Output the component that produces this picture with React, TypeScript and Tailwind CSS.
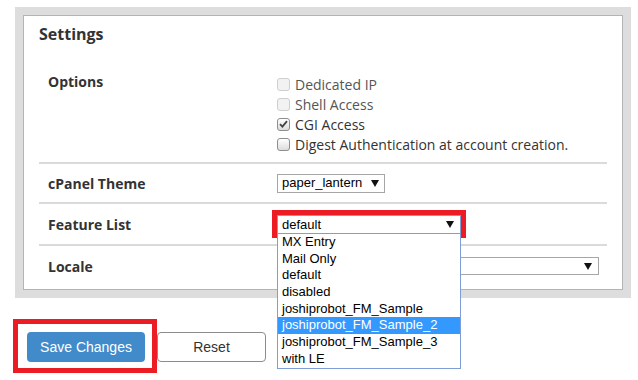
import React from "react"

const featureLists = [
  "MX Entry",
  "Mail Only",
  "default",
  "disabled",
  "joshiprobot_FM_Sample",
  "joshiprobot_FM_Sample_2",
  "joshiprobot_FM_Sample_3",
  "with LE",
]

function Arrow() {
  return (
    <svg width="8" height="7" viewBox="0 0 8 7" className="shrink-0">
      <path d="M0 0 H8 L4 7 Z" fill="#111" />
    </svg>
  )
}

function Checkbox({ checked, disabled }: { checked?: boolean; disabled?: boolean }) {
  return (
    <span
      className={
        disabled
          ? "flex h-[13px] w-[13px] shrink-0 items-center justify-center rounded-[3px] border border-[#cfcfcf] bg-[#f2f2f2]"
          : "flex h-[13px] w-[13px] shrink-0 items-center justify-center rounded-[3px] border border-[#8e8e8e] bg-gradient-to-b from-[#ffffff] to-[#dcdcdc]"
      }
    >
      {checked && (
        <svg width="9" height="8" viewBox="0 0 9 8">
          <path d="M1 4.2 L3.4 6.6 L8 1.2" stroke="#444" strokeWidth="1.8" fill="none" />
        </svg>
      )}
    </span>
  )
}

export default function App() {
  const options = [
    { label: "Dedicated IP", disabled: true },
    { label: "Shell Access", disabled: true },
    { label: "CGI Access", checked: true },
    { label: "Digest Authentication at account creation." },
  ]

  return (
    <div className="h-[380px] w-[638px] bg-white pl-[15px] pt-[7px]" style={{ fontFamily: '"Open Sans", sans-serif' }}>
      {/* Settings panel */}
      <div className="w-[616px] bg-[#dddddd] p-[8px]">
        <div className="border border-[#b3b3b3] bg-white pl-[15px] pr-[15px] pb-[3px]">
          <h2 className="pt-[7px] pb-[14px] text-[16px] font-bold leading-[22px] text-[#333]">Settings</h2>

          {/* Options */}
          <div className="flex h-[105px] border-b-2 border-[#dadada] pt-[12px]">
            <div className="w-[238px] pl-[9px] text-[14px] font-bold leading-[22px] text-[#333]">Options</div>
            <div className="flex flex-col pt-[3px]">
              {options.map((o) => (
                <label key={o.label} className="flex h-[20px] items-center gap-[5px] text-[14px] text-[#333]">
                  <Checkbox checked={o.checked} disabled={o.disabled} />
                  <span className={o.disabled ? "text-[#555]" : ""}>{o.label}</span>
                </label>
              ))}
            </div>
          </div>

          {/* cPanel Theme */}
          <div className="flex h-[40px] items-center border-b-2 border-[#dadada]">
            <div className="w-[238px] pl-[9px] text-[14px] font-bold text-[#333]">cPanel Theme</div>
            <div
              className="flex h-[19px] w-[108px] items-center justify-between border border-[#a6a6a6] bg-white pl-[4px] pr-[5px] text-[13px] text-black"
              style={{ fontFamily: '"Liberation Sans", Arial, sans-serif' }}
            >
              <span>paper_lantern</span>
              <Arrow />
            </div>
          </div>

          {/* Feature List */}
          <div className="flex h-[42px] items-center border-b-2 border-[#dadada]">
            <div className="w-[233px] pl-[9px] text-[14px] font-bold text-[#333]">Feature List</div>
            <div className="relative border-[5px] border-b-[4px] border-[#ec1c24]">
              <div
                className="flex h-[19px] w-[184px] items-center justify-between border border-[#7f9ed6] bg-white pl-[4px] pr-[6px] text-[13px] text-black"
                style={{ fontFamily: '"Liberation Sans", Arial, sans-serif' }}
              >
                <span>default</span>
                <Arrow />
              </div>
              {/* open dropdown */}
              <ul
                className="absolute left-0 top-[18px] z-10 w-[184px] border border-[#7f9ed6] bg-white text-[13px] text-black"
                style={{ fontFamily: '"Liberation Sans", Arial, sans-serif' }}
              >
                {featureLists.map((f) => (
                  <li
                    key={f}
                    className={
                      f === "joshiprobot_FM_Sample_2"
                        ? "h-[16.7px] bg-[#3399ff] pl-[4px] leading-[16.7px] text-white"
                        : "h-[16.7px] pl-[4px] leading-[16.7px]"
                    }
                  >
                    {f}
                  </li>
                ))}
              </ul>
            </div>
          </div>

          {/* Locale */}
          <div className="flex h-[40px] items-center">
            <div className="w-[238px] pl-[9px] text-[14px] font-bold text-[#333]">Locale</div>
            <div className="flex h-[18px] w-[322px] items-center justify-end border border-[#a6a6a6] bg-white pr-[6px]">
              <Arrow />
            </div>
          </div>
        </div>
      </div>

      {/* Buttons */}
      <div className="relative mt-[34px] flex pl-[12px]" style={{ fontFamily: '"Liberation Sans", Arial, sans-serif' }}>
        <button className="h-[30px] w-[118px] rounded-[4px] bg-[#428bca] text-[14px] text-white">Save Changes</button>
        <button className="ml-[12px] h-[30px] w-[109px] rounded-[4px] border border-[#8c8c8c] bg-white text-[14px] text-[#333]">
          Reset
        </button>
        <div className="pointer-events-none absolute left-[-2px] top-[-13px] h-[54px] w-[144px] border-[5px] border-[#ec1c24]" />
      </div>
    </div>
  )
}
